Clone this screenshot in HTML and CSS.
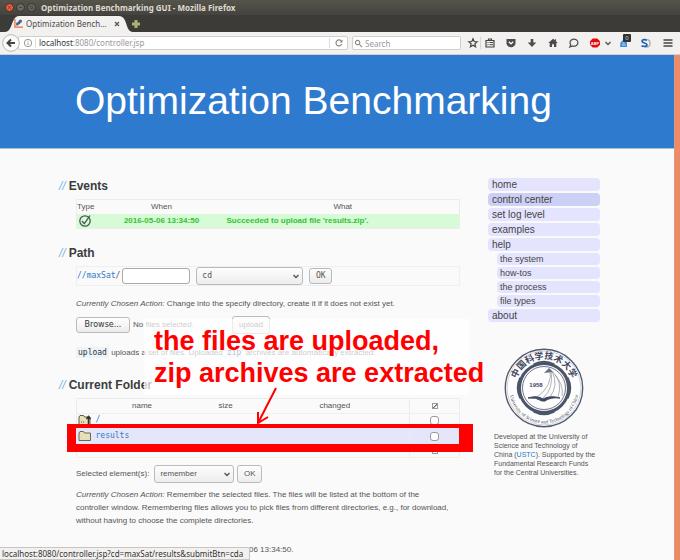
FILE: index.html
```html
<!DOCTYPE html>
<html lang="en">
<head>
<meta charset="utf-8">
<title>Optimization Benchmarking GUI</title>
<link rel="stylesheet" href="styles.css">
</head>
<body>
<div class="chrome">
  <div class="titlebar">
    <button class="win win-close" aria-label="Close window"><svg viewBox="0 0 9 9"><path d="M3 3l3 3M6 3l-3 3"/></svg></button>
    <button class="win" aria-label="Minimize"><svg viewBox="0 0 9 9"><path d="M2.5 4.5h4"/></svg></button>
    <button class="win" aria-label="Maximize"><svg viewBox="0 0 9 9"><path d="M3 3h3v3h-3z"/></svg></button>
    <span class="wintitle">Optimization Benchmarking GUI - Mozilla Firefox</span>
  </div>
  <div class="tabs">
    <svg class="tabshape" viewBox="0 0 128 17" preserveAspectRatio="none"><path d="M0 17C8 17 6 1 14 1H114C123 1 120 17 128 17Z"/></svg>
    <div class="tab">
      <svg class="favicon" viewBox="0 0 10 10"><path d="M1 0v9h9" fill="none" stroke="#e8703a" stroke-width="1.4"/><path d="M3 7l2-3 1 1 2-4" fill="none" stroke="#36517c" stroke-width="1.4"/><circle cx="3.8" cy="5.6" r="1.6" fill="#4a6a96"/><circle cx="7" cy="2.5" r="1.8" fill="#4d6480"/></svg>
      <span class="tabtitle">Optimization Bench…</span>
      <button class="tabclose" aria-label="Close tab"><svg viewBox="0 0 6 6"><path d="M1 1l4 4M5 1l-4 4"/></svg></button>
    </div>
    <button class="newtab" aria-label="New tab"><svg viewBox="0 0 10 10"><path d="M3.5 1h3v2.5h2.500v3h-2.500v2.500h-3v-2.500h-2.500v-3h2.500z"/></svg></button>
  </div>
  <div class="toolbar">
    <button class="back" aria-label="Back"><svg viewBox="0 0 18 18"><circle cx="9" cy="9" r="8.300" fill="#fbfbfa" stroke="#bbb8b3"/><path d="M13 9H6M9 5.500L5.500 9L9 12.500" fill="none" stroke="#444" stroke-width="2"/></svg></button>
    <div class="urlbar">
      <svg class="info" viewBox="0 0 10 10"><circle cx="5" cy="5" r="3.700"/><path d="M5 4.500v2.500M5 2.700v1"/></svg>
      <span class="url"><b>localhost</b>:8080/controller.jsp</span>
      <button class="reload" aria-label="Reload"><svg viewBox="0 0 10 10"><path d="M7.500 3.300A3 3 0 1 0 7.800 6"/><path d="M8.500 1.500v3h-3z" fill="#888" stroke="none"/></svg></button>
    </div>
    <label class="search"><svg viewBox="0 0 10 10"><circle cx="4" cy="4" r="2.500"/><path d="M6 6l3 3"/></svg><input type="text" placeholder="Search" aria-label="Search"></label>
    <div class="tools">
      <button aria-label="Bookmark"><svg viewBox="0 0 12 12"><path d="M6 1.800l1.200 2.700 3 .3-2.300 2 .7 3L6 8.200 3.400 9.800l.7-3-2.300-2 3-.3z" fill="none" stroke="#444" stroke-width="1.200"/></svg></button>
      <button aria-label="Bookmarks list"><svg viewBox="0 0 12 12"><path d="M2 3.500h8v6.500h-8zM4.500 3.500v-1.500h3v1.500" fill="none" stroke="#444" stroke-width="1.200"/><path d="M3.500 5.500h1M5.500 5.500h3.500M3.500 7.700h1M5.500 7.700h3.500" stroke="#444"/></svg></button>
      <button aria-label="Pocket"><svg viewBox="0 0 12 12"><path d="M1.500 2h9v4.200a4.500 4 0 0 1-9 0z" fill="#4b4b50"/><path d="M3.800 4.700L6 6.800l2.200-2.100" fill="none" stroke="#fff" stroke-width="1.200"/></svg></button>
      <button aria-label="Downloads"><svg viewBox="0 0 12 12"><path d="M4.700 2h2.600v3.500h3L6 10 1.700 5.500h3z" fill="#4b4b50"/></svg></button>
      <button aria-label="Home"><svg viewBox="0 0 12 12"><path d="M6 1.800L1.300 6h1.400v4h2.300V7.200h2V10h2.300V6h1.400L9 4.300V2.300H7.800v1z" fill="#4b4b50"/></svg></button>
      <button aria-label="Chat"><svg viewBox="0 0 12 12"><path d="M1.800 10l1-2.200A4 3.500 0 1 1 4.800 9z" fill="none" stroke="#4b4b50" stroke-width="1.200"/></svg></button>
      <button aria-label="Ad block"><svg viewBox="0 0 12 12"><path d="M3.700 1.500h4.600L11 4.200v3.600L8.300 10.500H3.700L1 7.800V4.200z" fill="#e60b0b"/><text x="6" y="7.600" text-anchor="middle" class="abp">ABP</text></svg></button>
      <button class="caret" aria-label="Ad block menu"><svg viewBox="0 0 12 12"><path d="M3.500 5L6 7.500 8.500 5" fill="none" stroke="#555" stroke-width="1.400"/></svg></button>
      <button class="badged" aria-label="Privacy"><svg viewBox="0 0 12 12"><path d="M2.500 5.500L6 2l3 3.500V10h-7z" fill="#3f91dd"/><path d="M4 8h3.500M4.500 6h2" stroke="#bfe0fa"/></svg><span class="badge">0</span></button>
      <button aria-label="Scholar"><svg viewBox="0 0 12 12"><path d="M8.500 2.500a4 4 0 0 1 0 7.500H6" fill="none" stroke="#b5b5b5" stroke-width="1.500"/><path d="M8 3.200C6.500 2.300 3 2.200 3 4.200S8 5.800 8 7.800 4.300 9.700 2.500 8.700" fill="none" stroke="#1c62ae" stroke-width="1.700"/></svg></button>
      <button class="menu" aria-label="Menu"><svg viewBox="0 0 12 12"><path d="M1.500 3h9M1.500 6h9M1.500 9h9" stroke="#444" stroke-width="1.700"/></svg></button>
    </div>
  </div>
</div>

<div class="view">
  <div class="page">
    <header class="banner"><h1>Optimization Benchmarking</h1></header>
    <div class="columns">
      <main>
        <h2><i>//</i>Events</h2>
        <table class="events">
          <tr><th class="c-type">Type</th><th class="c-when">When</th><th>What</th></tr>
          <tr class="ok"><td class="c-type"><svg viewBox="0 0 14 14"><circle cx="7" cy="7" r="5.200"/><path d="M4 7l2.300 2.700L12 1.500"/></svg></td><td>2016-05-06 13:34:50</td><td class="c-what">Succeeded to upload file 'results.zip'.</td></tr>
        </table>

        <h2><i>//</i>Path</h2>
        <div class="pathbox">
          <label for="path"><a href="#">//maxSat</a>/</label><input id="path" type="text">
          <span class="pick pick-cd"><select aria-label="Action"><option>cd</option></select><svg viewBox="0 0 8 8"><path d="M1.500 3L4 5.500 6.500 3"/></svg></span>
          <button class="btn">OK</button>
        </div>
        <p><em>Currently Chosen Action:</em> Change into the specify directory, create it if it does not exist yet.</p>
        <div class="uploadrow"><button class="btn browse">Browse...</button><span>No files selected.</span><button class="btn up">upload</button></div>
        <p class="hint"><code>upload</code> uploads a set of files. Uploaded <code>zip</code> archives are automatically extracted.</p>

        <h2><i>//</i>Current Folder</h2>
        <div class="folder">
          <table class="files">
            <tr class="head"><th class="c-icon"></th><th class="c-name">name</th><th class="c-size">size</th><th>changed</th><th class="c-check"><input type="checkbox" class="mini" checked aria-label="Select all"></th></tr>
            <tr class="rup"><td><svg viewBox="0 0 14 12"><path d="M1 10.500V3l1-1.500h3.500l1 1.500H12v7.500z" fill="#e6e0b4" stroke="#5c5952"/><path d="M10.500 10V3M8.500 5l2-2.500L12.500 5" fill="none" stroke="#333" stroke-width="1.500"/><path d="M3 8h1M5 8h1" stroke="#555"/></svg></td><td class="link" colspan="3"><a href="#">/</a></td><td class="c-check"><input type="checkbox" aria-label="Select parent"></td></tr>
            <tr class="sel"><td><svg viewBox="0 0 14 12"><path d="M1 10.500V3l1-1.500h3.500l1 1.500H12.500v7.500z" fill="#e6e0b4" stroke="#6a675f"/></svg></td><td class="link" colspan="3"><a href="#">results</a></td><td class="c-check"><input type="checkbox" aria-label="Select results"></td></tr>
            <tr class="last"><td colspan="4"></td><td class="c-check"><input type="checkbox" class="mini" aria-label="Select none"></td></tr>
          </table>
          <div class="frame"></div>
          <div class="note">the files are uploaded,<br>zip archives are extracted</div>
          <svg class="arrow" viewBox="0 0 24 40"><path d="M20 1L2 36M2 25V36L12 30"/></svg>
        </div>
        <div class="actions"><label for="act">Selected element(s):</label><span class="pick pick-rem"><select id="act"><option>remember</option></select><svg viewBox="0 0 8 8"><path d="M1.500 3L4 5.500 6.500 3"/></svg></span><button class="btn sans">OK</button></div>
        <p class="explain"><em>Currently Chosen Action:</em> Remember the selected files. The files will be listed at the bottom of the controller window. Remembering files allows you to pick files from different directories, e.g., for download, without having to choose the complete directories.</p>
        <p class="version">Version 0.8.5-SNAPSHOT. Generation: 2016-05-06 13:34:50.</p>
      </main>
      <aside>
        <nav>
          <a href="#">home</a><a href="#" class="cur">control center</a><a href="#">set log level</a><a href="#">examples</a><a href="#">help</a>
          <a href="#" class="sub">the system</a><a href="#" class="sub">how-tos</a><a href="#" class="sub">the process</a><a href="#" class="sub">file types</a>
          <a href="#">about</a>
        </nav>
        <svg class="seal" viewBox="0 0 80 80" role="img" aria-label="University of Science and Technology of China">
          <defs><path id="upper" d="M11.500 43A28.700 28.700 0 1 1 68.500 43"/><path id="lower" d="M5.500 37A34.700 34.700 0 1 0 74.500 37"/></defs>
          <circle cx="40" cy="40" r="38.700" fill="#fdfdfd" stroke="#525a70" stroke-width="1.400"/>
          <circle cx="40" cy="40" r="36.900" fill="none" stroke="#a9adb9" stroke-width=".5"/>
          <circle cx="40" cy="40" r="24.500" fill="none" stroke="#4c546a" stroke-width="3"/>
          <g fill="none" stroke="#4c546a" stroke-width="3.500"><path d="M30 17q10-5 20 0M30 63q10 5 20 0M17 30q-5 10 0 20M63 30q5 10 0 20"/></g>
          <circle cx="40" cy="40" r="21.500" fill="#fdfdfd" stroke="#4c546a" stroke-width=".8"/>
          <text class="cn"><textPath href="#upper" startOffset="50%" text-anchor="middle">中国科学技术大学</textPath></text>
          <text class="en"><textPath href="#lower" startOffset="50%" text-anchor="middle">University of Science and Technology of China</textPath></text>
          <text x="32" y="39" text-anchor="middle" class="year">1958</text>
          <g fill="none" stroke="#7b8191" stroke-width=".6"><path d="M46 21q3 17-13 28M47 22q3 19-8 28M48 23q7 14-2 26M49 24q10 10 5 25M51 27q9 10 7 21"/></g>
          <path d="M24 50q9-3 15 1q7-4 17-1q-10-1-15 3h-3q-6-4-14-3z" fill="#3f475e" stroke="#3f475e"/>
          <path d="M40 25l5-5 4 4z" fill="#687086"/>
        </svg>
        <p class="credit">Developed at the University of Science and Technology of China (<a href="#">USTC</a>). Supported by the Fundamental Research Funds for the Central Universities.</p>
      </aside>
    </div>
  </div>
  <div class="scroll"></div>
  <div class="status">localhost:8080/controller.jsp?cd=maxSat/results&amp;submitBtn=cda</div>
</div>
</body>
</html>
```
FILE: styles.css
```css
* { box-sizing: border-box; }
body {
  margin: 0;
  height: 100vh;
  display: flex;
  flex-direction: column;
  overflow: hidden;
  font: 8px/13px "Liberation Sans", Arial, sans-serif;
  color: #555;
  background: #fafafa;
}
button, input, select { font: inherit; color: inherit; margin: 0; padding: 0; }
button { border: 0; background: none; }
svg { display: block; }
a { color: #2a7ac6; text-decoration: none; }

/* browser chrome */
.chrome { background: #3c3b37; font-family: "Noto Sans", sans-serif; }
.titlebar {
  height: 15px;
  display: flex;
  align-items: center;
  gap: 2px;
  padding: 0 5px;
  background: linear-gradient(#56534b, #45433e);
}
.win { width: 9px; height: 9px; border-radius: 50%; background: #6b6962; border: 1px solid #35342f; }
.win svg { width: 7px; height: 7px; fill: none; stroke: #3c3b37; }
.win-close { background: #ee5b34; }
.wintitle { margin-left: 3px; color: #dfdbd2; font-weight: bold; }
.tabs { height: 17px; display: flex; position: relative; padding-left: 14px; }
.tabshape { position: absolute; left: 5px; top: 0; width: 128px; height: 17px; fill: #f2f1f0; }
.tab { position: relative; width: 110px; display: flex; align-items: center; }
.favicon { width: 9px; height: 9px; margin-right: 3px; }
.tabtitle { flex: 1; color: #4a4a4a; white-space: nowrap; }
.tabclose svg { width: 6px; height: 6px; fill: none; stroke: #555; stroke-width: 1.2; }
.tabclose { margin-right: 4px; }
.newtab { position: relative; margin-left: 7px; }
.newtab svg { width: 10px; height: 10px; fill: #a8b473; }
.toolbar {
  height: 23px;
  display: flex;
  align-items: center;
  padding: 0 6px 0 2px;
  background: #f2f1f0;
  border-bottom: 1px solid #d2cfca;
}
.back { position: relative; width: 18px; height: 18px; }
.urlbar, .search {
  height: 14px;
  display: flex;
  align-items: center;
  background: #fff;
  border: 1px solid #d2cfcb;
  border-radius: 2px;
}
.urlbar { flex: 1; margin-left: -2px; padding-left: 4px; color: #999; }
.urlbar b { font-weight: normal; color: #333; }
.info { width: 10px; height: 10px; fill: none; stroke: #999; }
.url { flex: 1; margin-left: 2px; padding-left: 3px; border-left: 1px solid #ddd; line-height: 10px; }
.reload { width: 18px; border-left: 1px solid #ddd; }
.reload svg { width: 10px; height: 10px; margin: 0 auto; fill: none; stroke: #888; stroke-width: 1.2; }
.search { width: 109px; margin-left: 4px; padding-left: 1px; }
.search svg { width: 9px; height: 9px; fill: none; stroke: #888; stroke-width: 1.2; }
.search input { border: 0; outline: 0; width: 80px; height: 12px; margin-left: 2px; background: none; }
.search input::placeholder { color: #999; }
.tools { display: flex; align-items: center; gap: 9px; margin-left: 6px; }
.tools svg { width: 12px; height: 12px; }
.tools button:first-child { margin-right: -6px; border-right: 1px solid #d8d6d2; padding-right: 1px; }
.tools .caret { margin: 0 -5px 0 -8px; }
.tools .menu { margin-left: 2px; }
.badged { position: relative; }
.badge {
  position: absolute;
  left: 5px;
  top: -3px;
  width: 8px;
  height: 8px;
  border-radius: 1px;
  background: #333;
  color: #ccc;
  font-size: 6px;
  line-height: 8px;
}
.abp { font: bold 4px "Liberation Sans", sans-serif; fill: #fff; }

/* page */
.view { flex: 1; display: flex; position: relative; min-height: 0; overflow: hidden; }
.page { flex: 1; }
.scroll { width: 6px; background: #ee8a64; border-left: 1px solid #d99a82; }
.banner { height: 94px; padding: 24px 75px; background: #2e7acf; border-bottom: 1px solid #a8bdd8; }
h1 { margin: 0; font-size: 39px; line-height: 44px; font-weight: normal; color: #fff; white-space: nowrap; }
.columns { display: flex; justify-content: space-between; padding: 29px 74px 0 76px; }
main { flex: 1; max-width: 384px; }
h2 { margin: 16px 0 5px -17px; font-size: 12px; line-height: 16px; color: #3c3c3c; }
h2:first-child { margin-top: 0; }
h2 i { margin-right: 3px; font-weight: normal; color: #72b8ee; }
p { margin: 11px 0 0; }
table { width: 100%; border-collapse: collapse; table-layout: fixed; }
th { font-weight: normal; }
th, td { padding: 0; text-align: center; }
.events { border: 1px solid #ececec; }
.events tr { height: 14px; }
.events .c-type { width: 20px; text-align: left; }
.events .c-when { width: 130px; }
.events .c-what { text-align: left; }
.events svg { width: 14px; height: 14px; margin-left: 1px; fill: none; stroke: #47594f; stroke-width: 1.3; }
.ok td { background: #d7fad7; color: #35c135; font-weight: bold; }
.pathbox {
  height: 20px;
  display: flex;
  align-items: center;
  border: 1px solid #efefef;
  font-family: "DejaVu Sans Mono", monospace;
}
.pathbox input { width: 68px; height: 16px; margin: 0 6px 0 2px; border: 1px solid #aaa; border-radius: 3px; background: #fff; }
.pick { position: relative; }
.pick select {
  appearance: none;
  width: 100%;
  height: 18px;
  padding-left: 5px;
  border: 1px solid #bbb;
  border-radius: 3px;
  background: linear-gradient(#fdfdfd, #ededed);
}
.pick svg { position: absolute; right: 3px; top: 5px; width: 8px; height: 8px; fill: none; stroke: #555; stroke-width: 1.4; pointer-events: none; }
.pick-cd { width: 107px; margin-right: 6px; }
.pick-rem { width: 80px; margin: 0 3px 0 5px; }
.btn {
  height: 16px;
  min-width: 23px;
  padding: 0 4px;
  border: 1px solid #bbb;
  border-radius: 3px;
  background: linear-gradient(#fefefe, #ececec);
}
.uploadrow { display: flex; align-items: center; height: 18px; margin-top: 6px; }
.browse { width: 54px; font-family: "DejaVu Sans", sans-serif; color: #333; }
.uploadrow span { width: 99px; margin-left: 3px; }
.up { width: 38px; height: 18px; }
.hint { margin-top: 12px; }
.hint + h2 { margin-top: 18px; }
code { padding: 1px 2px; background: #eaf4fc; color: #333; font: 8px "DejaVu Sans Mono", monospace; }
.folder { position: relative; }
.files { border: 1px solid #ececec; }
.files tr { height: 14px; }
.files .head { height: 15px; }
.files td, .files th { border-bottom: 1px solid #efefef; line-height: 12px; }
.files .sel { height: 18px; background: #e6e6fa; }
.files .last { height: 12px; }
.files .c-icon { width: 17px; }
.files .c-name { width: 97px; }
.files .c-size { width: 70px; }
.files .c-check { width: 50px; border-left: 1px solid #ececec; }
.files svg { width: 14px; height: 12px; margin-left: 1px; }
.files .link { text-align: left; font-family: "DejaVu Sans Mono", monospace; padding-left: 2px; }
.files input {
  appearance: none;
  display: block;
  width: 9px;
  height: 9px;
  margin: 0 auto;
  border: 1px solid #999;
  border-radius: 3px;
  background: #fff;
}
.files .mini { width: 6px; height: 6px; border-radius: 0; }
.files .mini:checked { background: linear-gradient(135deg, #fff 40%, #666 45%, #666 60%, #fff 65%); }
.actions { display: flex; align-items: center; height: 18px; margin-top: 7px; }
.actions .btn { height: 18px; width: 25px; }
.explain { margin-top: 5px; padding-right: 8px; }
.version { margin-top: 16px; }

/* annotation over the folder list */
.frame { position: absolute; left: -9px; right: -13px; top: 26px; height: 28px; border: solid #f00; border-width: 4px 14px 8px 9px; }
.note {
  position: absolute;
  left: 68px;
  top: -79px;
  width: 325px;
  height: 76px;
  padding: 6px 0 0 10px;
  background: rgba(255, 255, 255, .7);
  color: #f00;
  font-weight: bold;
  font-size: 27px;
  line-height: 32px;
  white-space: nowrap;
}
.arrow { position: absolute; left: 180px; top: -11px; width: 24px; height: 40px; fill: none; stroke: #f00; stroke-width: 2; }

/* side column */
aside { width: 112px; margin-left: 28px; }
nav { display: flex; flex-direction: column; gap: 2px; }
nav a { height: 13px; padding-left: 4px; border-radius: 4px; background: #e4e4ff; color: #444; font-size: 10px; line-height: 14px; }
nav .cur { background: #ccd0f4; }
nav .sub { height: 12px; margin-left: 9px; padding-left: 3px; font-size: 9px; line-height: 13px; }
.seal { width: 80px; height: 80px; margin: 26px 0 0 16px; }
.cn { font: bold 9px "Noto Sans CJK SC", sans-serif; fill: #3f475e; }
.en { font: 5px "Liberation Serif", serif; fill: #3f475e; }
.year { font: bold 6px "Liberation Sans", sans-serif; fill: #3f475e; }
.credit { margin: 4px 4px 0 6px; font-size: 7px; line-height: 9px; }

.status {
  position: absolute;
  left: 0;
  bottom: 0;
  height: 13px;
  padding: 0 6px 0 2px;
  border: 1px solid #c8c5c0;
  border-left: 0;
  border-radius: 0 2px 0 0;
  background: #f2f1f0;
  color: #333;
  font-family: "Noto Sans", sans-serif;
  line-height: 12px;
}
```
